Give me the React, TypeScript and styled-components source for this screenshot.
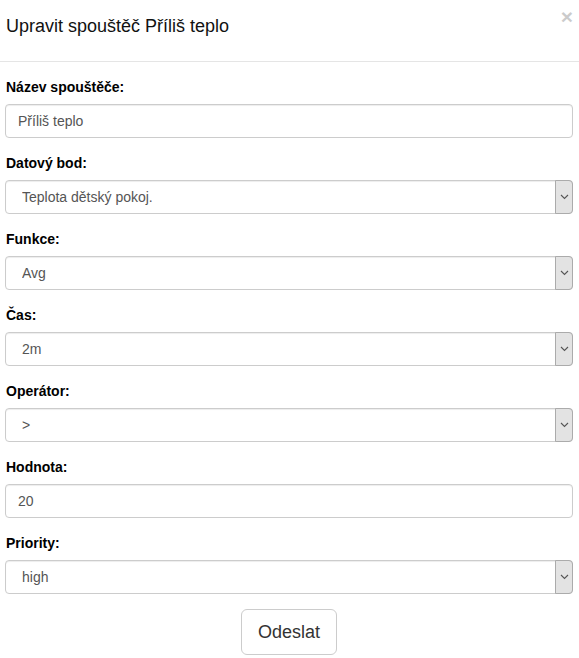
import React from "react";
import styled, { createGlobalStyle } from "styled-components";

const GlobalStyle = createGlobalStyle`
  html, body {
    margin: 0;
    padding: 0;
    background: #fff;
    font-family: "Liberation Sans", Arial, sans-serif;
    font-size: 14px;
    color: #333;
  }
  * { box-sizing: border-box; }
`;

const Modal = styled.div`
  width: 579px;
  background: #fff;
`;

const Header = styled.div`
  display: flex;
  justify-content: space-between;
  align-items: flex-start;
  height: 62px;
  padding: 13px 6px 0 6px;
  border-bottom: 1px solid #e5e5e5;
`;

const Title = styled.h4`
  margin: 0;
  font-size: 18px;
  font-weight: normal;
  line-height: 26px;
  color: #111;
`;

const Close = styled.button`
  margin: -7px 0 0 0;
  padding: 0;
  border: 0;
  background: transparent;
  font-family: "Liberation Sans", Arial, sans-serif;
  font-size: 21px;
  font-weight: bold;
  line-height: 1;
  color: #000;
  opacity: 0.2;
  cursor: pointer;
`;

const Body = styled.form`
  display: flex;
  flex-direction: column;
  padding: 15px 6px 0 5px;
`;

const Group = styled.div`
  display: flex;
  flex-direction: column;
  margin-bottom: 15px;
`;

const Label = styled.label`
  font-weight: bold;
  font-size: 14px;
  line-height: 20px;
  color: #000;
  margin: 0 0 7px 1px;
`;

const Input = styled.input`
  height: 34px;
  width: 100%;
  padding: 6px 12px;
  font-family: inherit;
  font-size: 14px;
  line-height: 20px;
  color: #555;
  border: 1px solid #ccc;
  border-radius: 4px;
  background: #fff;
  box-shadow: inset 0 1px 1px rgba(0, 0, 0, 0.075);
`;

const SelectWrap = styled.div`
  position: relative;
  height: 34px;
`;

const Select = styled.select`
  appearance: none;
  -webkit-appearance: none;
  height: 34px;
  width: 100%;
  padding: 6px 24px 6px 16px;
  font-family: inherit;
  font-size: 14px;
  color: #555;
  border: 1px solid #ccc;
  border-radius: 4px;
  background: #fff;
  box-shadow: inset 0 1px 1px rgba(0, 0, 0, 0.075);
`;

const Arrow = styled.span`
  position: absolute;
  top: 0;
  right: 0;
  width: 18px;
  height: 34px;
  display: flex;
  align-items: center;
  justify-content: center;
  background: #e3e3e3;
  border: 1px solid #ababab;
  border-radius: 0 4px 4px 0;
  pointer-events: none;
`;

const Footer = styled.div`
  display: flex;
  justify-content: center;
`;

const Button = styled.button`
  height: 46px;
  padding: 10px 16px;
  font-family: "Liberation Sans", Arial, sans-serif;
  font-size: 18px;
  line-height: 24px;
  color: #333;
  background: #fff;
  border: 1px solid #ccc;
  border-radius: 6px;
  cursor: pointer;
`;

const Chevron = () => (
  <svg width="9" height="6" viewBox="0 0 9 6">
    <path d="M1 1l3.5 3.5L8 1" fill="none" stroke="#555" strokeWidth="1.1" />
  </svg>
);

const SelectField: React.FC<{ label: string; value: string }> = ({
  label,
  value,
}) => (
  <Group>
    <Label>{label}</Label>
    <SelectWrap>
      <Select defaultValue={value}>
        <option value={value}>{value}</option>
      </Select>
      <Arrow>
        <Chevron />
      </Arrow>
    </SelectWrap>
  </Group>
);

const TextField: React.FC<{ label: string; value: string }> = ({
  label,
  value,
}) => (
  <Group>
    <Label>{label}</Label>
    <Input defaultValue={value} />
  </Group>
);

export default function App() {
  return (
    <>
      <GlobalStyle />
      <Modal>
        <Header>
          <Title>Upravit spouštěč Příliš teplo</Title>
          <Close type="button">×</Close>
        </Header>
        <Body onSubmit={(e) => e.preventDefault()}>
          <TextField label="Název spouštěče:" value="Příliš teplo" />
          <SelectField label="Datový bod:" value="Teplota dětský pokoj." />
          <SelectField label="Funkce:" value="Avg" />
          <SelectField label="Čas:" value="2m" />
          <SelectField label="Operátor:" value=">" />
          <TextField label="Hodnota:" value="20" />
          <SelectField label="Priority:" value="high" />
          <Footer>
            <Button type="submit">Odeslat</Button>
          </Footer>
        </Body>
      </Modal>
    </>
  );
}
